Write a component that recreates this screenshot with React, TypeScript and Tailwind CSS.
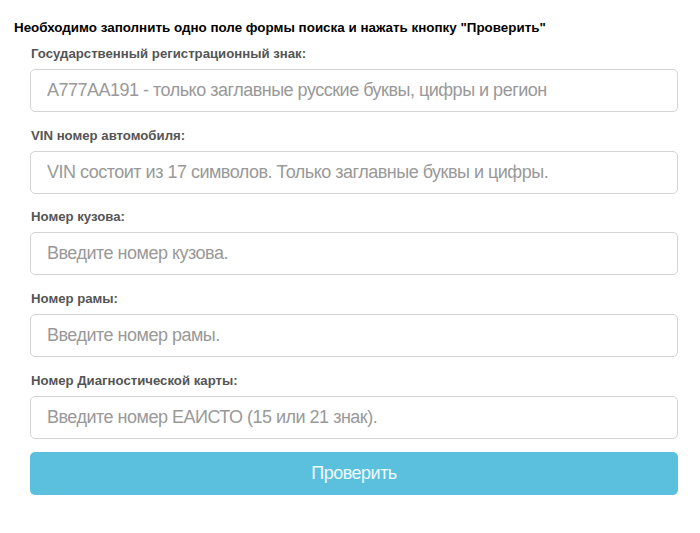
const fields = [
  {
    id: 'gosnumber',
    label: 'Государственный регистрационный знак:',
    placeholder: 'А777АА191 - только заглавные русские буквы, цифры и регион',
  },
  {
    id: 'vin',
    label: 'VIN номер автомобиля:',
    placeholder: 'VIN состоит из 17 символов. Только заглавные буквы и цифры.',
  },
  {
    id: 'bodynumber',
    label: 'Номер кузова:',
    placeholder: 'Введите номер кузова.',
  },
  {
    id: 'chassis',
    label: 'Номер рамы:',
    placeholder: 'Введите номер рамы.',
  },
  {
    id: 'eaisto',
    label: 'Номер Диагностической карты:',
    placeholder: 'Введите номер ЕАИСТО (15 или 21 знак).',
  },
];

export default function App() {
  return (
    <div
      className="min-h-[533px] w-[700px] bg-white"
      style={{ fontFamily: '"Liberation Sans", Arial, sans-serif' }}
    >
      <div className="pl-[14px] pt-[20px]">
        <p className="text-[13.4px] font-bold leading-[16px] text-black">
          Необходимо заполнить одно поле формы поиска и нажать кнопку "Проверить"
        </p>
      </div>
      <form className="flex flex-col pl-[30px] pr-[22px] pt-[5px]">
        {fields.map((f) => (
          <div key={f.id} className="flex h-[81.7px] flex-col">
            <label
              htmlFor={f.id}
              className="pl-[1px] pt-[5px] text-[13.2px] font-bold leading-[16px] text-[#555]"
            >
              {f.label}
            </label>
            <input
              id={f.id}
              placeholder={f.placeholder}
              className="mt-[7px] h-[43px] w-full rounded-[5px] border border-[#d4d4d4] px-[16px] text-[18px] tracking-[-0.5px] text-[#555] outline-none placeholder:text-[#999]"
            />
          </div>
        ))}
        <button
          type="button"
          className="mt-[3px] h-[43px] w-full rounded-[5px] bg-[#5bc0de] text-[18px] tracking-[-0.5px] text-[#f0fbff]"
        >
          Проверить
        </button>
      </form>
    </div>
  );
}
